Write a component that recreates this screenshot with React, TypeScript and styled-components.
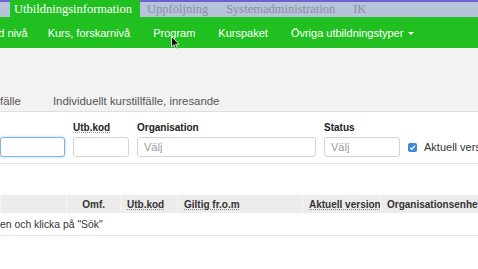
import styled, { createGlobalStyle } from "styled-components";

const GlobalStyle = createGlobalStyle`
  html, body {
    margin: 0;
    padding: 0;
    background: #fff;
    overflow: hidden;
  }
  body {
    font-family: "Liberation Sans", Arial, sans-serif;
    width: 478px;
    height: 269px;
  }
`;

const Page = styled.div`
  position: relative;
  width: 478px;
  height: 269px;
  overflow: hidden;
`;

const TopBar = styled.div`
  height: 15px;
  background: #b6c3d9;
  border-top: 2px solid #6f62cc;
  display: flex;
  align-items: stretch;
  padding-left: 10px;
  font-family: "Liberation Serif", "Times New Roman", serif;
  font-size: 12.5px;
`;

const TopTab = styled.div<{ active?: boolean }>`
  display: flex;
  align-items: center;
  margin-top: ${(p) => (p.active ? "-2px" : "0")};
  padding: ${(p) => (p.active ? "2px 8px 0 4px" : "0 11px 0 7px")};
  background: ${(p) => (p.active ? "#1fc01f" : "transparent")};
  color: ${(p) => (p.active ? "#fff" : "#8990a3")};
  white-space: nowrap;
`;

const NavBar = styled.div`
  height: 31px;
  background: #1fc01f;
  display: flex;
  align-items: center;
  gap: 23px;
  margin-left: -48px;
  font-size: 11px;
  color: #fff;
`;

const NavItem = styled.span<{ first?: boolean }>`
  white-space: nowrap;
  margin-right: ${(p) => (p.first ? "-3px" : "0")};
`;

const Caret = styled.span`
  display: inline-block;
  margin-left: 5px;
  width: 0;
  height: 0;
  border-left: 3px solid transparent;
  border-right: 3px solid transparent;
  border-top: 3px solid #fff;
  vertical-align: middle;
`;

const GrayBand = styled.div`
  height: 63px;
  background: #f2f2f2;
  border-bottom: 1px solid #dedede;
  display: flex;
  align-items: flex-end;
`;

const SubTabs = styled.div`
  display: flex;
  gap: 32px;
  padding-bottom: 4px;
  font-size: 11.4px;
  color: #555;
`;

const FormRow = styled.div`
  display: flex;
  align-items: flex-end;
  gap: 8px;
  padding: 10px 0 6px;
  border-bottom: 1px solid #e4e4e4;
  white-space: nowrap;
`;

const Field = styled.div<{ w: number }>`
  display: flex;
  flex-direction: column;
  gap: 3px;
  flex: 0 0 ${(p) => p.w}px;
`;

const Label = styled.span<{ abbr?: boolean }>`
  font-size: 10px;
  font-weight: bold;
  color: #222;
  height: 12px;
  text-decoration: ${(p) => (p.abbr ? "underline dotted #999" : "none")};
`;

const Input = styled.div<{ focused?: boolean }>`
  height: 18px;
  border: 1px solid ${(p) => (p.focused ? "#7fb2e0" : "#d4d4d4")};
  box-shadow: ${(p) => (p.focused ? "0 0 3px rgba(102,175,233,0.6)" : "none")};
  border-radius: 3px;
  background: #fff;
  display: flex;
  align-items: center;
  padding-left: 6px;
  font-size: 11px;
  color: #9a9a9a;
`;

const CheckWrap = styled.div`
  display: flex;
  align-items: center;
  gap: 7px;
  height: 20px;
  font-size: 11px;
  color: #333;
  white-space: nowrap;
`;

const CheckBox = styled.span`
  flex: 0 0 9px;
  width: 9px;
  height: 9px;
  border-radius: 2px;
  background: #3d86dd;
  display: flex;
  align-items: center;
  justify-content: center;
`;

const Table = styled.div`
  margin-top: 31px;
`;

const HeadRow = styled.div`
  display: grid;
  grid-template-columns: 66px 54px 57px 125px 78px 1fr;
  height: 18px;
  background: #ececec;
`;

const HeadCell = styled.div<{ right?: boolean; abbr?: boolean }>`
  display: flex;
  align-items: center;
  justify-content: ${(p) => (p.right ? "flex-end" : "flex-start")};
  padding: ${(p) => (p.right ? "0 15px 0 0" : "0 0 0 6px")};
  border-left: 1px solid #f6f6f6;
  font-size: 10px;
  font-weight: bold;
  color: #333;
  white-space: nowrap;
  overflow: hidden;
  text-decoration: ${(p) => (p.abbr ? "underline dotted #888" : "none")};
`;

const BodyRow = styled.div`
  height: 22px;
  border-bottom: 1px solid #e4e4e4;
  display: flex;
  align-items: center;
  font-size: 10.4px;
  color: #333;
`;

const Cursor = styled.svg`
  position: absolute;
  left: 171px;
  top: 36px;
`;

export default function App() {
  return (
    <Page>
      <GlobalStyle />
      <TopBar>
        <TopTab active>Utbildningsinformation</TopTab>
        <TopTab>Uppföljning</TopTab>
        <TopTab>Systemadministration</TopTab>
        <TopTab>IK</TopTab>
      </TopBar>
      <NavBar>
        <NavItem first>Avancerad nivå</NavItem>
        <NavItem>Kurs, forskarnivå</NavItem>
        <NavItem>Program</NavItem>
        <NavItem>Kurspaket</NavItem>
        <NavItem>
          Övriga utbildningstyper
          <Caret />
        </NavItem>
      </NavBar>
      <GrayBand>
        <SubTabs>
          <span>fälle</span>
          <span>Individuellt kurstillfälle, inresande</span>
        </SubTabs>
      </GrayBand>
      <FormRow>
        <Field w={65}>
          <Input focused />
        </Field>
        <Field w={56}>
          <Label abbr>Utb.kod</Label>
          <Input />
        </Field>
        <Field w={179}>
          <Label>Organisation</Label>
          <Input>Välj</Input>
        </Field>
        <Field w={76}>
          <Label>Status</Label>
          <Input>Välj</Input>
        </Field>
        <CheckWrap>
          <CheckBox>
            <svg width="7" height="7" viewBox="0 0 7 7">
              <path d="M1 3.6 L2.8 5.3 L6 1.6" stroke="#fff" strokeWidth="1.3" fill="none" />
            </svg>
          </CheckBox>
          Aktuell version
        </CheckWrap>
      </FormRow>
      <Table>
        <HeadRow>
          <HeadCell />
          <HeadCell right>Omf.</HeadCell>
          <HeadCell abbr>Utb.kod</HeadCell>
          <HeadCell abbr>Giltig fr.o.m</HeadCell>
          <HeadCell abbr>Aktuell version</HeadCell>
          <HeadCell>Organisationsenhet</HeadCell>
        </HeadRow>
        <BodyRow>en och klicka på "Sök"</BodyRow>
      </Table>
      <Cursor width="9" height="14" viewBox="0 0 9 14">
        <path d="M0.5 0.5 L0.5 11 L3 8.7 L4.8 13 L6.3 12.3 L4.6 8.2 L8 8.2 Z" fill="#111" stroke="#fff" strokeWidth="0.8" />
      </Cursor>
    </Page>
  );
}
